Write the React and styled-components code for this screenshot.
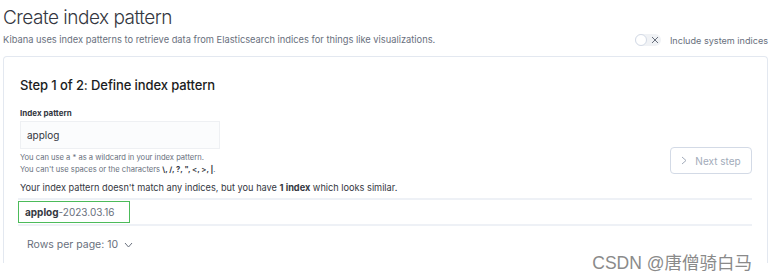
import React from 'react';
import styled, { createGlobalStyle } from 'styled-components';

const GlobalStyle = createGlobalStyle`
  body {
    margin: 0;
    background: #fff;
    font-family: Inter, 'Noto Sans', sans-serif;
    color: #343741;
  }
`;

const Page = styled.div`
  width: 771px;
  height: 280px;
  padding: 0 3px 0 3px;
  box-sizing: border-box;
  position: relative;
  overflow: hidden;
`;

const Header = styled.div`
  display: flex;
  justify-content: space-between;
  align-items: flex-end;
  height: 47px;
`;

const Title = styled.h1`
  margin: 6px 0 0;
  font-size: 19px;
  font-weight: 300;
  color: #343741;
  line-height: 26px;
  letter-spacing: -0.5px;
`;

const Subtitle = styled.p`
  margin: 2px 0 0;
  font-size: 9.3px;
  color: #69707d;
  line-height: 14px;
`;

const SwitchRow = styled.label`
  display: flex;
  align-items: center;
  gap: 9px;
  font-size: 9.1px;
  color: #69707d;
  margin-bottom: 1px;
`;

const Switch = styled.span`
  display: flex;
  align-items: center;
  width: 26px;
  height: 12px;
  border-radius: 7px;
  background: #f0f2f5;
  span {
    width: 12px;
    height: 12px;
    border-radius: 50%;
    background: #fff;
    border: 1px solid #d3dae6;
    box-sizing: border-box;
  }
  svg {
    margin-left: 4px;
  }
`;

const Panel = styled.section`
  margin-top: 9px;
  border: 1px solid #e3e8f0;
  border-bottom: none;
  border-radius: 4px 4px 0 0;
  height: 207px;
  box-sizing: border-box;
  padding: 18px 15px 0 16px;
`;

const StepTitle = styled.h2`
  margin: 0;
  font-size: 13px;
  font-weight: 500;
  color: #1a1c21;
  line-height: 20px;
  letter-spacing: -0.1px;
`;

const Body = styled.div`
  display: flex;
  justify-content: space-between;
  align-items: flex-end;
  margin-top: 13px;
`;

const Field = styled.div`
  display: flex;
  flex-direction: column;
`;

const Label = styled.div`
  font-size: 8px;
  font-weight: 700;
  color: #343741;
  line-height: 10px;
`;

const Input = styled.div`
  margin-top: 3px;
  width: 200px;
  height: 28px;
  box-sizing: border-box;
  background: #fbfcfd;
  border: 1px solid #eef0f3;
  padding: 0 6px;
  display: flex;
  align-items: center;
  font-size: 10px;
  color: #343741;
`;

const Help = styled.div`
  margin-top: 3px;
  font-size: 7.6px;
  line-height: 12px;
  color: #69707d;
  b {
    color: #343741;
  }
`;

const NextButton = styled.button`
  margin-bottom: 2px;
  width: 82px;
  height: 27px;
  border: 1px solid #d3dae6;
  border-radius: 4px;
  background: #fff;
  color: #a2abba;
  font-family: inherit;
  font-size: 10px;
  display: flex;
  align-items: center;
  justify-content: center;
  gap: 8px;
`;

const Notice = styled.p`
  margin: 5px 0 0;
  font-size: 9.2px;
  color: #343741;
  line-height: 14px;
`;

const Table = styled.div`
  margin-top: 3px;
  border-top: 2px solid #eef1f6;
  border-bottom: 2px solid #eef1f6;
  height: 24px;
  margin-left: -2px;
  display: flex;
  align-items: center;
`;

const Highlight = styled.div`
  width: 112px;
  height: 22px;
  box-sizing: border-box;
  border: 1.5px solid #4cbb5a;
  display: flex;
  align-items: center;
  padding-left: 6px;
  font-size: 10px;
  color: #69707d;
  b {
    color: #343741;
  }
`;

const Rows = styled.div`
  margin-top: 12px;
  margin-left: 7px;
  display: flex;
  align-items: center;
  gap: 6px;
  font-size: 10.5px;
  color: #69707d;
`;

const Watermark = styled.div`
  position: absolute;
  right: 19px;
  bottom: 6px;
  font-family: 'Liberation Sans', 'Noto Sans CJK SC', sans-serif;
  font-size: 17.5px;
  line-height: 22px;
  color: #8a8a8a;
`;

export default function App() {
  return (
    <Page>
      <GlobalStyle />
      <Header>
        <div>
          <Title>Create index pattern</Title>
          <Subtitle>
            Kibana uses index patterns to retrieve data from Elasticsearch indices for things like visualizations.
          </Subtitle>
        </div>
        <SwitchRow>
          <Switch>
            <span />
            <svg width="8" height="8" viewBox="0 0 8 8">
              <path d="M1 1L7 7M7 1L1 7" stroke="#69707d" strokeWidth="1" />
            </svg>
          </Switch>
          Include system indices
        </SwitchRow>
      </Header>
      <Panel>
        <StepTitle>Step 1 of 2: Define index pattern</StepTitle>
        <Body>
          <Field>
            <Label>Index pattern</Label>
            <Input>applog</Input>
            <Help>
              You can use a * as a wildcard in your index pattern.
              <br />
              You can't use spaces or the characters <b>\, /, ?, ", &lt;, &gt;, |</b>.
            </Help>
          </Field>
          <NextButton>
            <svg width="6" height="9" viewBox="0 0 6 9">
              <path d="M1 1L5 4.5L1 8" stroke="#a2abba" fill="none" strokeWidth="1" />
            </svg>
            Next step
          </NextButton>
        </Body>
        <Notice>
          Your index pattern doesn't match any indices, but you have <b>1 index</b> which looks similar.
        </Notice>
        <Table>
          <Highlight>
            <b>applog</b>-2023.03.16
          </Highlight>
        </Table>
        <Rows>
          Rows per page: 10
          <svg width="9" height="6" viewBox="0 0 9 6">
            <path d="M1 1L4.5 5L8 1" stroke="#69707d" fill="none" strokeWidth="1" />
          </svg>
        </Rows>
      </Panel>
      <Watermark>CSDN @唐僧骑白马</Watermark>
    </Page>
  );
}
